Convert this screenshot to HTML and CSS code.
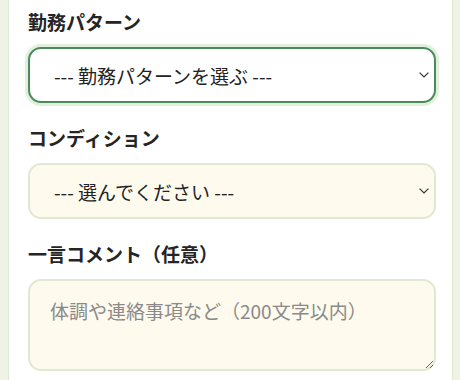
FILE: index.html
```html
<!DOCTYPE html>
<html lang="ja">
<head>
    <meta charset="UTF-8">
    <title>体調チェック</title>
    <link rel="stylesheet" href="styles.css">
</head>
<body>
    <div class="card">
        <div class="field">
            <label class="field-label" for="pattern">勤務パターン</label>
            <div class="select-wrap">
                <select id="pattern" class="field-input is-focused">
                    <option>--- 勤務パターンを選ぶ ---</option>
                </select>
                <svg class="chevron" viewBox="0 0 10 6"><path d="M0.6 0.6 L5 5 L9.4 0.6"/></svg>
            </div>
        </div>
        <div class="field">
            <label class="field-label" for="condition">コンディション</label>
            <div class="select-wrap">
                <select id="condition" class="field-input">
                    <option>--- 選んでください ---</option>
                </select>
                <svg class="chevron" viewBox="0 0 10 6"><path d="M0.6 0.6 L5 5 L9.4 0.6"/></svg>
            </div>
        </div>
        <div class="field">
            <label class="field-label" for="comment">一言コメント（任意）</label>
            <textarea id="comment" class="field-input comment" placeholder="体調や連絡事項など（200文字以内）"></textarea>
        </div>
    </div>
</body>
</html>
```

FILE: styles.css
```css
body {
    margin: 0;
    background: #eef3e5;
    font-family: "Noto Sans CJK JP", "Noto Sans", sans-serif;
    color: #222;
    height: 380px;
    overflow: hidden;
}
.card {
    margin: 0 7px 0 8px;
    min-height: 380px;
    background: #fff;
    border-left: 1px solid #dfe8d3;
    border-right: 1px solid #dfe8d3;
    padding: 8px 16px 0 19px;
    box-sizing: border-box;
}
.field {
    margin-bottom: 21px;
}
.field-label {
    display: block;
    font-size: 19px;
    font-weight: bold;
    line-height: 27px;
    margin-bottom: 12px;
    color: #252525;
}
.select-wrap {
    position: relative;
}
.field-input {
    display: block;
    width: 100%;
    box-sizing: border-box;
    font-family: inherit;
    font-size: 19px;
    color: #222;
    background: #fefaee;
    border: 2px solid #e0e9d3;
    border-radius: 13px;
    outline: none;
}
select.field-input {
    -webkit-appearance: none;
    appearance: none;
    height: 56px;
    padding: 0 30px 0 24px;
}
.field-input.is-focused {
    background: #fff;
    border-color: #4b8a5b;
    box-shadow: 0 0 0 3px #e1f0dc;
}
.chevron {
    position: absolute;
    right: 7px;
    top: 25px;
    width: 10px;
    height: 6px;
    fill: none;
    stroke: #333;
    stroke-width: 1.2;
}
.comment {
    height: 92px;
    padding: 16px 20px;
    line-height: 27px;
    resize: vertical;
}
.comment::placeholder {
    color: #8a8a8a;
}
```
